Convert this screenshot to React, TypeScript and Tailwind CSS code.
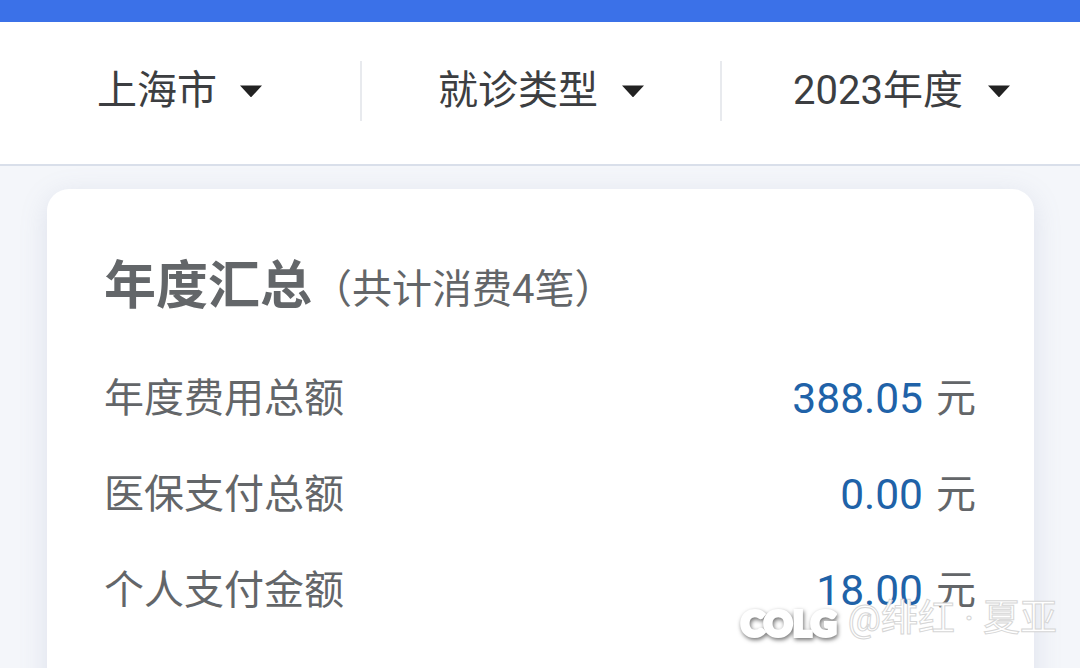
const cjk = "font-['Roboto','Noto_Sans_CJK_SC',sans-serif]";

function Caret() {
  return (
    <svg width="24" height="14" viewBox="0 0 24 14" className="shrink-0">
      <path d="M1 1.5 H23 L12.8 12.5 a1 1 0 0 1 -1.6 0 Z" fill="#222222" />
    </svg>
  );
}

function Row({ label, value }: { label: string; value: string }) {
  return (
    <div className="flex h-[96px] items-center justify-between text-[40px] leading-none text-[#636669]">
      <span>{label}</span>
      <span className="flex items-center gap-[13px]">
        <span className="text-[42.5px] text-[#2062a8]">{value}</span>
        <span>元</span>
      </span>
    </div>
  );
}

export default function App() {
  return (
    <div className={`relative h-[668px] w-[1080px] overflow-hidden bg-[#f4f6fa] ${cjk}`}>
      <div className="h-[22px] bg-[#3b71e8]" />
      <div className="flex h-[144px] items-center border-b-2 border-[#d9dfea] bg-white pb-[5px]">
        <div className="flex h-[60px] w-[362px] items-center gap-[22px] border-r-2 border-[#e8eaee] pl-[97px] text-[40px] leading-none text-[#3c3e41]">
          <span>上海市</span>
          <Caret />
        </div>
        <div className="flex h-[60px] w-[360px] items-center gap-[23px] border-r-2 border-[#e8eaee] pl-[76px] text-[40px] leading-none text-[#3c3e41]">
          <span>就诊类型</span>
          <Caret />
        </div>
        <div className="flex h-[60px] flex-1 items-center gap-[24px] pl-[71px] text-[40px] leading-none text-[#3c3e41]">
          <span>2023年度</span>
          <Caret />
        </div>
      </div>
      <div className="mx-[47px] mt-[23px] h-[520px] w-[987px] rounded-[22px] bg-white pl-[57px] pr-[58px] pt-[72px] shadow-[0_6px_28px_rgba(120,135,170,0.18)]">
        <div className="flex items-center text-[#636669]">
          <span className="text-[52px] font-bold leading-none">年度汇总</span>
          <span className="mt-[6px] text-[40px] leading-none">（共计消费4笔）</span>
        </div>
        <div className="mt-[38px]">
          <Row label="年度费用总额" value="388.05" />
          <Row label="医保支付总额" value="0.00" />
          <Row label="个人支付金额" value="18.00" />
        </div>
      </div>
      <div className="absolute left-[741px] top-[605px] flex items-center gap-[11px] leading-none">
        <span className="text-[35px] font-black tracking-[0.5px] text-white [font-family:'Lato','Noto_Sans',sans-serif] [-webkit-text-stroke:4px_#ffffff] [filter:drop-shadow(1px_2px_2px_rgba(0,0,0,0.55))]">
          COLG
        </span>
        <span className="-mt-[9px] text-[37px] text-white [-webkit-text-stroke:1px_#d6d6d6]">@绯红 · 夏亚</span>
      </div>
    </div>
  );
}
